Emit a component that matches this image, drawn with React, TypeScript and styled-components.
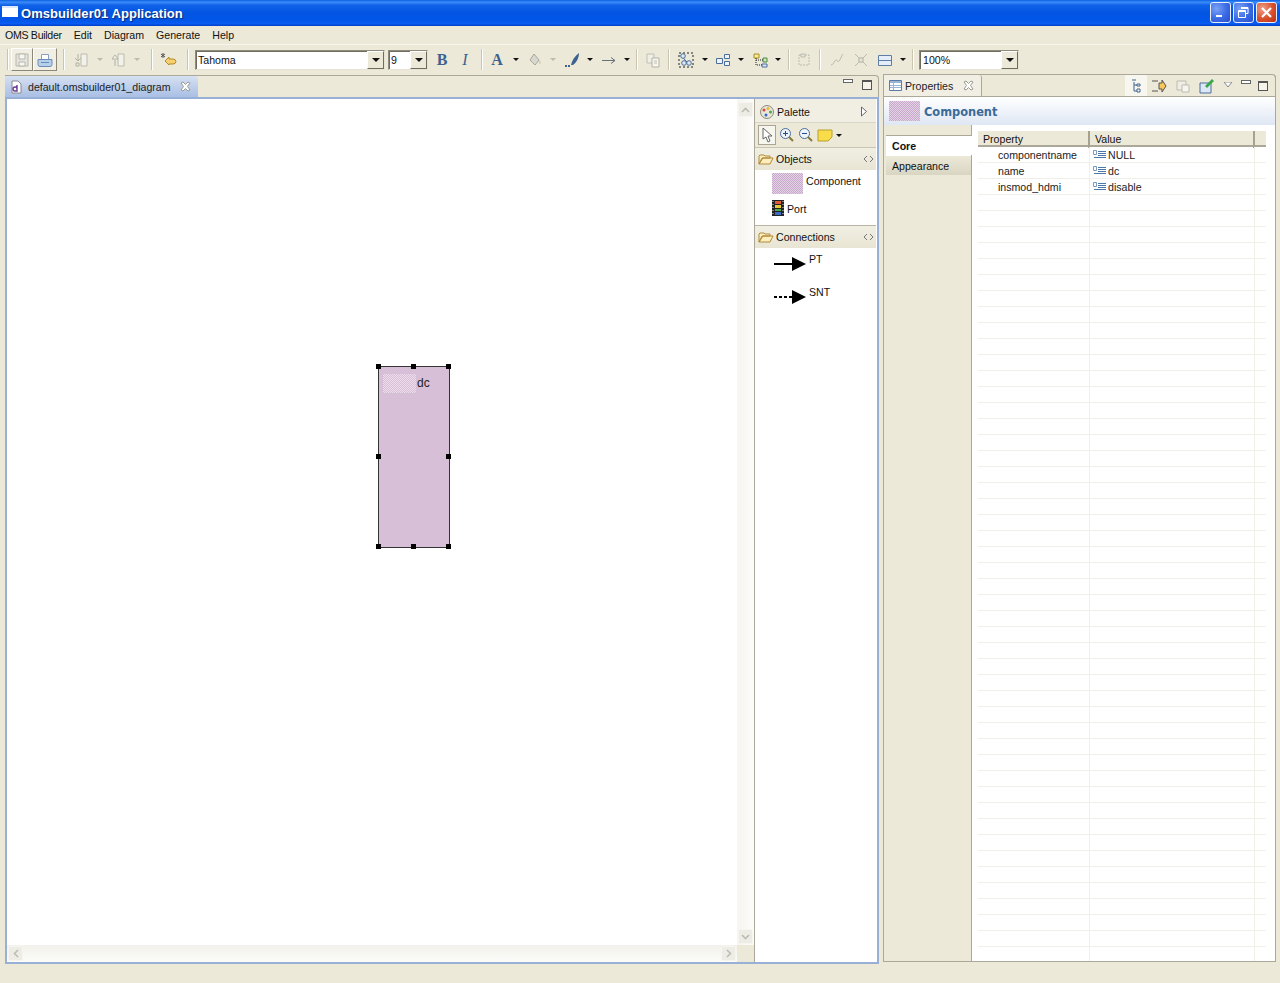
import React from "react";
import styled, { createGlobalStyle } from "styled-components";

const Global = createGlobalStyle`
  html, body { margin: 0; padding: 0; background: #ece9d8; }
  body { font-family: "Liberation Sans", Arial, sans-serif; font-size: 10.6px; color: #111; overflow: hidden; }
  * { box-sizing: border-box; }
`;

const Page = styled.div`
  width: 1280px; height: 983px; display: flex; flex-direction: column; background: #ece9d8; overflow: hidden;
`;
const TitleBar = styled.div`
  height: 26px; flex: none; display: flex; align-items: center; padding: 0 3px 1px 2px;
  background: linear-gradient(180deg, #0a5fe0 0%, #3c8dfa 8%, #0f62e8 20%, #0254e2 50%, #0256ea 80%, #0a5cf2 90%, #0040c8 100%);
`;
const TitleIcon = styled.div`
  width: 16px; height: 11px; background: #fff; border-top: 2px solid #dfe8fa; margin: -3px 3px 0 0;
`;
const TitleText = styled.div`
  font-family: "Liberation Sans", sans-serif; font-weight: bold; font-size: 13px; color: #fff;
  text-shadow: 1px 1px 1px #0a2a7a; flex: 1; margin-top: 1px; letter-spacing: 0.05px;
`;
const WinBtn = styled.div<{ $close?: boolean }>`
  width: 21px; height: 21px; margin-left: 2px; border: 1px solid #e8eefc; border-radius: 3px;
  display: flex; align-items: center; justify-content: center;
  background: ${p => p.$close
    ? "radial-gradient(circle at 30% 30%, #f0a08a 0%, #d8502c 55%, #b83010 100%)"
    : "radial-gradient(circle at 30% 30%, #7aa2f4 0%, #3a6ae6 55%, #2a50c8 100%)"};
`;
const MenuBar = styled.div`
  height: 19px; flex: none; display: flex; align-items: center; padding-left: 5px; gap: 12px;
  color: #111; border-bottom: 1px solid #f8f6ec;
`;
const MenuItem = styled.span`
  &:first-child { letter-spacing: -0.3px; }
`;
const ToolBar = styled.div`
  height: 29px; flex: none; display: flex; align-items: center; padding-left: 5px;
`;
const Slot = styled.div<{ $w: number }>`
  width: ${p => p.$w}px; height: 24px; flex: none; display: flex; align-items: center; justify-content: center;
`;
const PressedSlot = styled(Slot)`
  height: 23px; border: 1px solid; border-color: #fff #8a8778 #8a8778 #fff; background: #f1efe4;
`;
const Sep = styled.div`
  width: 2px; height: 21px; background: #c9c5b0; border-right: 1px solid #fff;
`;
const Caret = styled.div`
  width: 0; height: 0; border-left: 3px solid transparent; border-right: 3px solid transparent; border-top: 3px solid #111;
`;
const FadedCaret = styled(Caret)`
  border-top-color: #bdbbaf;
`;
const Bold = styled.span`
  font-family: "Liberation Serif", serif; font-size: 16px; font-weight: bold; color: #3c638f;
`;
const Italic = styled(Bold)`
  font-weight: normal; font-style: italic;
`;
const Combo = styled.div<{ $w: number; $ml?: number; $pl?: number }>`
  width: ${p => p.$w}px; height: 20px; flex: none; margin-left: ${p => p.$ml ?? 0}px; background: #fff; display: flex; align-items: center;
  border: 1px solid; border-color: #8f8c7c #e6e3d4 #e6e3d4 #8f8c7c; box-shadow: inset 1px 1px 0 #6f6c5f;
  padding-left: ${p => p.$pl ?? 2}px; justify-content: space-between;
`;
const ComboBtn = styled.div`
  width: 17px; height: 18px; background: #ece9d8; display: flex; align-items: center; justify-content: center;
  border: 1px solid; border-color: #fff #6f6c5f #6f6c5f #fff;
`;
const ComboCaret = styled(Caret)`
  border-left-width: 4px; border-right-width: 4px; border-top-width: 4px;
`;
const Workbench = styled.div`
  flex: none; height: 890px; display: flex; padding-left: 5px; align-items: flex-start;
`;
const EditorPane = styled.div`
  width: 874px; height: 889px; display: flex; flex-direction: column; margin-top: 1px;
`;
const TabStrip = styled.div`
  height: 22px; flex: none; display: flex; align-items: flex-end; justify-content: space-between;
  border-top: 1px solid #aca899; border-right: 1px solid #aca899; border-top-right-radius: 4px;
`;
const EditorTab = styled.div`
  height: 21px; display: flex; align-items: center; width: 193px; padding-left: 5px;
  background: linear-gradient(180deg, #d6e0f2 0%, #a9bfe4 100%); border-top-right-radius: 4px;
`;
const TabLabel = styled.span<{ $ml: number; $w: number }>`
  margin-left: ${p => p.$ml}px; width: ${p => p.$w}px; white-space: nowrap; color: #222;
`;
const TabControls = styled.div`
  display: flex; align-items: center; gap: 9px; padding-right: 6px; height: 21px; margin-bottom: 2px;
`;
const MinIcon = styled.div`
  width: 10px; height: 4px; border: 1px solid #666; background: #fff; margin-top: -7px;
`;
const MaxIcon = styled.div`
  width: 10px; height: 10px; border: 1px solid #555; border-top-width: 2px; background: #f6f4ea;
`;
const EditorBody = styled.div`
  flex: 1; display: flex; border: 2px solid #99b0d6; background: #fff; min-height: 0;
`;
const CanvasColumn = styled.div`
  width: 748px; flex: none; display: flex; flex-direction: column; border-right: 1px solid #aca899;
`;
const CanvasRow = styled.div`
  flex: 1; display: flex; min-height: 0;
`;
const Canvas = styled.div`
  flex: 1; position: relative; background: #fff;
`;
const VScroll = styled.div`
  width: 17px; flex: none; display: flex; flex-direction: column; justify-content: space-between;
  background: linear-gradient(90deg, #f6f5ef, #fcfcfa); padding: 3px 0 1px 1px;
`;
const ScrollBtn = styled.div`
  width: 15px; height: 15px; background: #eeede5; border-radius: 2px; border: 1px solid #f6f5f0;
  display: flex; align-items: center; justify-content: center;
`;
const HRow = styled.div`
  height: 17px; flex: none; display: flex;
`;
const HScroll = styled.div`
  flex: 1; display: flex; justify-content: space-between; align-items: center; padding: 0 1px;
  background: linear-gradient(180deg, #f2f1ea, #fcfcfa);
`;
const ScrollCorner = styled.div`
  width: 17px; background: #ece9d8;
`;
const Node = styled.div`
  position: absolute; left: 371px; top: 267px; width: 72px; height: 182px;
  background: #d8bfd8; border: 1px solid #333; border-radius: 2px; padding: 7px 0 0 4px; display: flex; align-items: flex-start;
`;
const Dither = styled.div<{ $w: number; $h: number }>`
  width: ${p => p.$w}px; height: ${p => p.$h}px; flex: none;
  background-color: #e2d2e4;
  background-image: conic-gradient(#c8a8cc 25%, transparent 0 50%, #c8a8cc 0 75%, transparent 0);
  background-size: 2px 2px;
`;
const NodeDither = styled(Dither)`
  background-color: #d8bfd8;
  background-image: conic-gradient(#ecdcec 25%, transparent 0 50%, #ecdcec 0 75%, transparent 0);
`;
const NodeLabel = styled.span`
  font-size: 12px; margin: 2px 0 0 1px; color: #222;
`;
const Handle = styled.div<{ $x: number; $y: number }>`
  position: absolute; width: 5px; height: 5px; background: #000;
  left: calc(${p => p.$x}% - 3px); top: calc(${p => p.$y}% - 3px);
`;
const Palette = styled.div`
  width: 121px; flex: none; background: #fff; display: flex; flex-direction: column;
`;
const PaletteHead = styled.div`
  height: 24px; flex: none; display: flex; align-items: center; padding: 2px 8px 0 4px; background: #f1efe3; justify-content: space-between;
  border-bottom: 1px solid #d9d6c6;
`;
const HeadLeft = styled.div`
  display: flex; align-items: center; gap: 2px;
`;
const PaletteTools = styled.div`
  height: 25px; flex: none; display: flex; align-items: center; padding-left: 3px; gap: 3px; background: #ece9d8; border-bottom: 1px solid #c9c5b0;
`;
const SelectTool = styled.div`
  width: 18px; height: 20px; background: #f6f5ee; border: 1px solid #a9a695; display: flex; align-items: center; justify-content: center;
`;
const Drawer = styled.div`
  height: 22px; flex: none; display: flex; align-items: center; justify-content: space-between; padding: 0 2px 0 3px;
  background: linear-gradient(180deg, #f1efe3, #e8e5d4);
`;
const DrawerItems = styled.div<{ $h: number }>`
  height: ${p => p.$h}px; flex: none; display: flex; flex-direction: column; border-bottom: 1px solid #b8b5a4;
`;
const PaletteItem = styled.div<{ $pl: number; $h: number; $pt?: number }>`
  height: ${p => p.$h}px; display: flex; padding-left: ${p => p.$pl}px; gap: 3px; align-items: flex-start; padding-top: ${p => p.$pt ?? 2}px;
`;
const ItemLabel = styled.span<{ $mt: number }>`
  margin-top: ${p => p.$mt}px;
`;
const PropsPane = styled.div`
  width: 393px; height: 888px; margin-left: 4px; display: flex; flex-direction: column;
  border: 1px solid #aca899; border-top: none; border-top-right-radius: 4px;
`;
const PropsTabs = styled.div`
  height: 23px; flex: none; display: flex; justify-content: space-between; align-items: flex-end;
  border: 1px solid #aca899; margin: 0 -1px;
  border-top-right-radius: 4px;
`;
const PropsTab = styled.div`
  width: 98px; height: 21px; display: flex; align-items: center; padding-left: 5px; background: #f1efe4; border-right: 1px solid #aca899; border-top-right-radius: 3px;
`;
const PropsControls = styled.div`
  display: flex; align-items: center; height: 21px; padding-right: 4px;
`;
const CtlBtn = styled.div<{ $w: number }>`
  width: ${p => p.$w}px; height: 21px; display: flex; align-items: center; justify-content: center;
`;
const CtlActive = styled(CtlBtn)`
  background: #f7f6ef;
`;
const PropsHead = styled.div`
  height: 28px; flex: none; display: flex; align-items: center; gap: 4px; padding-left: 5px;
  background: linear-gradient(180deg, #fff 0%, #dfe7f4 100%);
`;
const PropsHeadText = styled.span`
  font-family: "DejaVu Sans", sans-serif; font-weight: bold; font-size: 11.4px; color: #3a6a9a; margin-top: 1px;
`;
const PropsMain = styled.div`
  flex: 1; display: flex; min-height: 0;
`;
const SideTabs = styled.div`
  width: 88px; flex: none; display: flex; flex-direction: column; padding: 10px 0 0 2px; border-right: 1px solid #aca899;
`;
const SideTab = styled.div<{ $active?: boolean }>`
  height: 20px; display: flex; align-items: center; padding-left: 6px; margin-right: ${p => (p.$active ? -1 : 0)}px; position: relative;
  background: ${p => (p.$active ? "#fff" : "linear-gradient(180deg, #ece9d8, #d8d5c3)")};
  border-top: 1px solid ${p => (p.$active ? "#aca899" : "#fff")};
  font-weight: ${p => (p.$active ? "bold" : "normal")};
`;
const TableWrap = styled.div`
  flex: 1; background: #fff; padding: 6px 9px 0 6px; overflow: hidden;
`;
const THead = styled.div`
  display: grid; grid-template-columns: 112px 165px 12px; height: 16px; background: #ece9d8; border-bottom: 2px solid #aca899;
`;
const TH = styled.div`
  padding-left: 5px; border-right: 2px solid #a5a28f; line-height: 17px;
`;
const Row = styled.div`
  display: grid; grid-template-columns: 112px 165px 12px; height: 16px; border-bottom: 1px solid #f0f0e8;
`;
const Cell = styled.div`
  border-right: 1px solid #f0f0e8; padding-left: 20px; line-height: 16px; color: #222; white-space: nowrap;
`;
const ValueCell = styled(Cell)`
  padding-left: 3px; display: flex; align-items: center; gap: 2px;
`;
const EmptyCell = styled(Cell)`
  border-right: none;
`;

const Ico = ({ w = 16, h = 16, children }: { w?: number; h?: number; children: React.ReactNode }) => (
  <svg width={w} height={h} viewBox={`0 0 ${w} ${h}`} fill="none">{children}</svg>
);

const X = () => (
  <Ico w={11} h={11}><path d="M1 2l2-1 2.5 2.5L8 1l2 1-2.5 3.5L10 9l-2 1-2.5-2.5L3 10 1 9l2.5-3.5z" stroke="#9a9a90" fill="#fff" /></Ico>
);
const Folder = () => (
  <Ico w={16} h={13}><path d="M1 11V3l1-1h4l1 1h5v2H5L1 11zM1 11l3-6h11l-3 6z" fill="#fdeebc" stroke="#b08a3a" /></Ico>
);
const Collapse = () => (
  <Ico w={11} h={8}><path d="M4 1L1 4l3 3M7 1l3 3-3 3" stroke="#777" /></Ico>
);
const PropIco = () => (
  <Ico w={13} h={10}><path d="M.5.5h3v4h-3z" stroke="#7a9ac2" fill="#fff" /><path d="M5 1.5h8M5 3.5h8M5 5.5h8M1 7.5h12" stroke="#4a78a8" /></Ico>
);
const Up = () => <Ico w={9} h={6}><path d="M1 5l3.5-3.5L8 5" stroke="#bdbcb2" strokeWidth="1.6" /></Ico>;
const Down = () => <Ico w={9} h={6}><path d="M1 1l3.5 3.5L8 1" stroke="#bdbcb2" strokeWidth="1.6" /></Ico>;
const Left = () => <Ico w={6} h={9}><path d="M5 1L1.5 4.5 5 8" stroke="#bdbcb2" strokeWidth="1.6" /></Ico>;
const Right = () => <Ico w={6} h={9}><path d="M1 1l3.5 3.5L1 8" stroke="#bdbcb2" strokeWidth="1.6" /></Ico>;

const handles: [number, number][] = [[0, 0], [50, 0], [100, 0], [0, 50], [100, 50], [0, 100], [50, 100], [100, 100]];
const rows: [string, string][] = [["componentname", "NULL"], ["name", "dc"], ["insmod_hdmi", "disable"]];
const blanks = Array.from({ length: 48 }, (_, i) => i);

const App = () => (
  <Page>
    <Global />
    <TitleBar>
      <TitleIcon />
      <TitleText>Omsbuilder01 Application</TitleText>
      <WinBtn><Ico w={11} h={11}><path d="M1 8h6v2H1z" fill="#fff" /></Ico></WinBtn>
      <WinBtn><Ico w={13} h={13}><path d="M4 1.5h7v6H9M1.5 4.5h7v7h-7zM1.5 5.5h7M4 2.5h7" stroke="#fff" /></Ico></WinBtn>
      <WinBtn $close><Ico w={13} h={13}><path d="M2 2l9 9M11 2l-9 9" stroke="#fff" strokeWidth="2.2" /></Ico></WinBtn>
    </TitleBar>
    <MenuBar>
      {["OMS Builder", "Edit", "Diagram", "Generate", "Help"].map(m => <MenuItem key={m}>{m}</MenuItem>)}
    </MenuBar>
    <ToolBar>
      <Slot $w={6}><Sep /></Slot>
      <PressedSlot $w={22}><Ico><path d="M2 2h12v12H2z" fill="#e4e3dc" stroke="#b9b8ae" /><path d="M5 2h6v5H5zM5 10h6v4H5z" fill="#f6f6f0" stroke="#b9b8ae" /></Ico></PressedSlot>
      <PressedSlot $w={24}><Ico w={18}><path d="M5.5 2.5h7v5h-7z" fill="#fff" stroke="#8a9fc0" /><path d="M2 7.5h14v5a2 2 0 0 1-2 2H4a2 2 0 0 1-2-2z" fill="#b8cfea" stroke="#6a8cba" /><path d="M5 10.5h8" stroke="#6a8cba" /></Ico></PressedSlot>
      <Slot $w={14}><Sep /></Slot>
      <Slot $w={20}><Ico><path d="M8 2h6v12H8z" fill="#f2f1ea" stroke="#bcbbae" /><path d="M5 2v6M2 6l3 3 3-3M3 11h3v3H3z" stroke="#b2b1a2" /></Ico></Slot>
      <Slot $w={18}><FadedCaret /></Slot>
      <Slot $w={18}><Ico><path d="M8 2h6v12H8z" fill="#f2f1ea" stroke="#bcbbae" /><path d="M5 14V8M2 7l3-4 3 4z" stroke="#b2b1a2" fill="#f6f5ee" /></Ico></Slot>
      <Slot $w={20}><FadedCaret /></Slot>
      <Slot $w={10}><Sep /></Slot>
      <Slot $w={24}><Ico w={18}><path d="M5 9l4-4v2h4a3 3 0 0 1 3 2.5 3 3 0 0 1-3 2.5H9v1z" fill="#f8d070" stroke="#b08a2a" /><path d="M3 1v5M1 2l4 3M5 2L1 5" stroke="#555" /></Ico></Slot>
      <Slot $w={14}><Sep /></Slot>
      <Combo $w={190}>Tahoma<ComboBtn><ComboCaret /></ComboBtn></Combo>
      <Combo $w={40} $ml={3}>9<ComboBtn><ComboCaret /></ComboBtn></Combo>
      <Slot $w={3} />
      <Slot $w={22}><Bold>B</Bold></Slot>
      <Slot $w={24}><Italic>I</Italic></Slot>
      <Slot $w={10}><Sep /></Slot>
      <Slot $w={20}><Bold>A</Bold></Slot>
      <Slot $w={18}><Caret /></Slot>
      <Slot $w={20}><Ico><path d="M7 2l5 6-4 5-5-5z" fill="#d8d8d0" stroke="#a8a89c" /><path d="M12 8c2 2 2 4 1 4s-1-2-1-4z" fill="#d2c9a0" /></Ico></Slot>
      <Slot $w={16}><FadedCaret /></Slot>
      <Slot $w={22}><Ico><path d="M7 13C8 8 11 4 15 1c0 4-2 9-6 12z" fill="#3c638f" /><path d="M1 14h5" stroke="#3c638f" strokeWidth="2" strokeDasharray="2 1" /></Ico></Slot>
      <Slot $w={14}><Caret /></Slot>
      <Slot $w={24}><Ico><path d="M1 8.5h13M10 5.5l4 3-4 3" stroke="#666f7a" /></Ico></Slot>
      <Slot $w={12}><Caret /></Slot>
      <Slot $w={8}><Sep /></Slot>
      <Slot $w={24}><Ico><path d="M2 2h7v9H2z" fill="#efeee6" stroke="#c0bfb2" /><path d="M7 6h7v9H7z" fill="#f6f5ee" stroke="#b4b3a5" /><path d="M9 9h3M9 11h3" stroke="#c0bfb2" /></Ico></Slot>
      <Slot $w={8}><Sep /></Slot>
      <Slot $w={26}><Ico w={18} h={18}><path d="M2 2h14v14H2z" stroke="#222" strokeDasharray="2 2" /><path d="M4 4l4 5 5 5" stroke="#4a6f9c" /><circle cx="6" cy="5" r="2.3" fill="#dfe8f4" stroke="#4a6f9c" /><circle cx="7" cy="12" r="2.3" fill="#dfe8f4" stroke="#4a6f9c" /><circle cx="12" cy="12" r="2.3" fill="#dfe8f4" stroke="#4a6f9c" /></Ico></Slot>
      <Slot $w={12}><Caret /></Slot>
      <Slot $w={24}><Ico><path d="M1.5 6.5h6v5h-6zM9.5 2.5h5v4h-5zM9.5 9.5h5v4h-5z" fill="#eef3fa" stroke="#4a6f9c" /></Ico></Slot>
      <Slot $w={12}><Caret /></Slot>
      <Slot $w={26}><Ico><path d="M2 2h5v4H2z" fill="#f7e9a0" stroke="#a8901c" /><path d="M11 6h4v4h-4z" fill="#c9e8c0" stroke="#4f8a40" /><path d="M10 12h5v3h-5z" fill="#dfe8f4" stroke="#4a6f9c" /><path d="M4 6v7h6M4 8h7" stroke="#222" strokeDasharray="1 1" /></Ico></Slot>
      <Slot $w={10}><Caret /></Slot>
      <Slot $w={12}><Sep /></Slot>
      <Slot $w={18}><Ico><path d="M3 3h10v10H3z" stroke="#bcbbae" strokeDasharray="2 1" /><path d="M5 2h4v3H5z" fill="#e8e7dc" stroke="#bcbbae" /></Ico></Slot>
      <Slot $w={14}><Sep /></Slot>
      <Slot $w={20}><Ico><path d="M2 13c3 0 3-5 5-5s1 3 3 1 2-5 4-7" stroke="#bcbbae" /></Ico></Slot>
      <Slot $w={28}><Ico><path d="M2 2l12 12M14 2L2 14" stroke="#bcbbae" /><path d="M6 6h4v4H6z" fill="#e8e7dc" stroke="#b0af9f" /></Ico></Slot>
      <Slot $w={20}><Ico><path d="M1.5 3.5h13v10h-13z" fill="#e4edf8" stroke="#5f7ea6" /><path d="M1 8.5h14" stroke="#5f7ea6" /></Ico></Slot>
      <Slot $w={16}><Caret /></Slot>
      <Slot $w={4}><Sep /></Slot>
      <Combo $w={100} $ml={4} $pl={3}>100%<ComboBtn><ComboCaret /></ComboBtn></Combo>
    </ToolBar>
    <Workbench>
      <EditorPane>
        <TabStrip>
          <EditorTab>
            <Ico w={12} h={14}><path d="M2 1h6l3 3v9H2z" fill="#fff" stroke="#8a8a90" /><path d="M7 5v6H5a2 2 0 1 1 2-2" stroke="#6a3a9a" strokeWidth="1.4" /></Ico>
            <TabLabel $ml={6} $w={152}>default.omsbuilder01_diagram</TabLabel>
            <X />
          </EditorTab>
          <TabControls><MinIcon /><MaxIcon /></TabControls>
        </TabStrip>
        <EditorBody>
          <CanvasColumn>
            <CanvasRow>
              <Canvas>
                <Node>
                  <NodeDither $w={33} $h={19} />
                  <NodeLabel>dc</NodeLabel>
                  {handles.map(([x, y]) => <Handle key={`${x}-${y}`} $x={x} $y={y} />)}
                </Node>
              </Canvas>
              <VScroll>
                <ScrollBtn><Up /></ScrollBtn>
                <ScrollBtn><Down /></ScrollBtn>
              </VScroll>
            </CanvasRow>
            <HRow>
              <HScroll>
                <ScrollBtn><Left /></ScrollBtn>
                <ScrollBtn><Right /></ScrollBtn>
              </HScroll>
              <ScrollCorner />
            </HRow>
          </CanvasColumn>
          <Palette>
            <PaletteHead>
              <HeadLeft>
                <Ico><circle cx="8" cy="8" r="6.5" fill="#e8e6d8" stroke="#8a8a7a" /><circle cx="5" cy="6" r="1.5" fill="#d84a3a" /><circle cx="9" cy="4.5" r="1.5" fill="#e8b83a" /><circle cx="11.5" cy="8" r="1.5" fill="#4aa84a" /><circle cx="7" cy="11" r="1.5" fill="#3a6ac8" /></Ico>
                <span>Palette</span>
              </HeadLeft>
              <Ico w={8} h={11}><path d="M1.5 1l5 4.5-5 4.5z" stroke="#666" fill="#fff" /></Ico>
            </PaletteHead>
            <PaletteTools>
              <SelectTool><Ico w={14} h={16}><path d="M3 1v11l3-2 2 5 2-1-2-5h4z" fill="#fff" stroke="#666" /></Ico></SelectTool>
              <Ico><circle cx="6.5" cy="6.5" r="5" fill="#eef3fa" stroke="#4a6f9c" /><path d="M4 6.5h5M6.5 4v5" stroke="#224a8a" /><path d="M10 10l4 4" stroke="#8a7a3a" strokeWidth="2" /></Ico>
              <Ico><circle cx="6.5" cy="6.5" r="5" fill="#eef3fa" stroke="#4a6f9c" /><path d="M4 6.5h5" stroke="#224a8a" /><path d="M10 10l4 4" stroke="#8a7a3a" strokeWidth="2" /></Ico>
              <Ico><path d="M1 3h14v7l-4 4H1z" fill="#f8dc4a" stroke="#b8a02a" /></Ico>
              <Caret />
            </PaletteTools>
            <Drawer><HeadLeft><Folder />Objects</HeadLeft><Collapse /></Drawer>
            <DrawerItems $h={56}>
              <PaletteItem $pl={17} $h={28} $pt={3}>
                <Dither $w={31} $h={21} />
                <ItemLabel $mt={2}>Component</ItemLabel>
              </PaletteItem>
              <PaletteItem $pl={17} $h={27}>
                <Ico w={12} h={16}><path d="M0 0h12v16H0z" fill="#222" /><path d="M3 1h6v3H3z" fill="#e05a3a" /><path d="M3 5h6v3H3z" fill="#e8c83a" /><path d="M3 9h6v2H3z" fill="#4aa84a" /><path d="M3 12h6v3H3z" fill="#3a6ac8" /><path d="M1 1v14M11 1v14" stroke="#ddd" strokeDasharray="1 2" /></Ico>
                <ItemLabel $mt={3}>Port</ItemLabel>
              </PaletteItem>
            </DrawerItems>
            <Drawer><HeadLeft><Folder />Connections</HeadLeft><Collapse /></Drawer>
            <PaletteItem $pl={19} $h={33}>
              <svg width={32} height={22} viewBox="0 0 32 22"><path d="M0 14h22" stroke="#000" strokeWidth="2" /><path d="M18 7l14 7-14 7z" fill="#000" /></svg>
              <ItemLabel $mt={3}>PT</ItemLabel>
            </PaletteItem>
            <PaletteItem $pl={19} $h={33}>
              <svg width={32} height={22} viewBox="0 0 32 22"><path d="M0 14h20" stroke="#000" strokeWidth="2" strokeDasharray="3 2" /><path d="M18 7l14 7-14 7z" fill="#000" /></svg>
              <ItemLabel $mt={3}>SNT</ItemLabel>
            </PaletteItem>
          </Palette>
        </EditorBody>
      </EditorPane>
      <PropsPane>
        <PropsTabs>
          <PropsTab>
            <Ico w={14} h={12}><path d="M.5.5h12v10H.5z" fill="#fff" stroke="#5a7aa8" /><path d="M1 1h11v2H1z" fill="#9ab4d8" /><path d="M1 5.5h11M1 7.5h11M4.5 3v7" stroke="#9ab4d8" /></Ico>
            <TabLabel $ml={2} $w={58}>Properties</TabLabel>
            <X />
          </PropsTab>
          <PropsControls>
            <CtlActive $w={22}><Ico w={12} h={14}><path d="M2 1h4M4 3v9h3M4 6h3" stroke="#3c638f" /><path d="M7 5h3v2H7zM7 10h3v3H7z" fill="#fff" stroke="#3c638f" /></Ico></CtlActive>
            <CtlBtn $w={24}><Ico><path d="M1 3h6M1 13h6M8 5h3V2l4 6-4 6v-3H8z" fill="#f6c85a" stroke="#555" /></Ico></CtlBtn>
            <CtlBtn $w={24}><Ico w={14} h={14}><path d="M1 2h9v9H1z" fill="#efeee6" stroke="#bcbbae" /><path d="M6 6h7v7H6z" fill="#f6f5ee" stroke="#bcbbae" /></Ico></CtlBtn>
            <CtlBtn $w={24}><Ico><path d="M1 5h11v10H1z" fill="#dce8f6" stroke="#4a6f9c" /><path d="M6 8l7-7 2 2-7 7z" fill="#3aa84a" /></Ico></CtlBtn>
            <CtlBtn $w={18}><Ico w={10} h={8}><path d="M1 1h8L5 6z" fill="#fff" stroke="#888" transform="translate(0 -1)" /></Ico></CtlBtn>
            <CtlBtn $w={18}><MinIcon /></CtlBtn>
            <CtlBtn $w={16}><MaxIcon /></CtlBtn>
          </PropsControls>
        </PropsTabs>
        <PropsHead>
          <Dither $w={31} $h={20} />
          <PropsHeadText>Component</PropsHeadText>
        </PropsHead>
        <PropsMain>
          <SideTabs>
            <SideTab $active>Core</SideTab>
            <SideTab>Appearance</SideTab>
          </SideTabs>
          <TableWrap>
            <THead><TH>Property</TH><TH>Value</TH><span /></THead>
            {rows.map(([k, v]) => (
              <Row key={k}><Cell>{k}</Cell><ValueCell><PropIco />{v}</ValueCell><EmptyCell /></Row>
            ))}
            {blanks.map(i => <Row key={i}><Cell /><Cell /><EmptyCell /></Row>)}
          </TableWrap>
        </PropsMain>
      </PropsPane>
    </Workbench>
  </Page>
);

export default App;
